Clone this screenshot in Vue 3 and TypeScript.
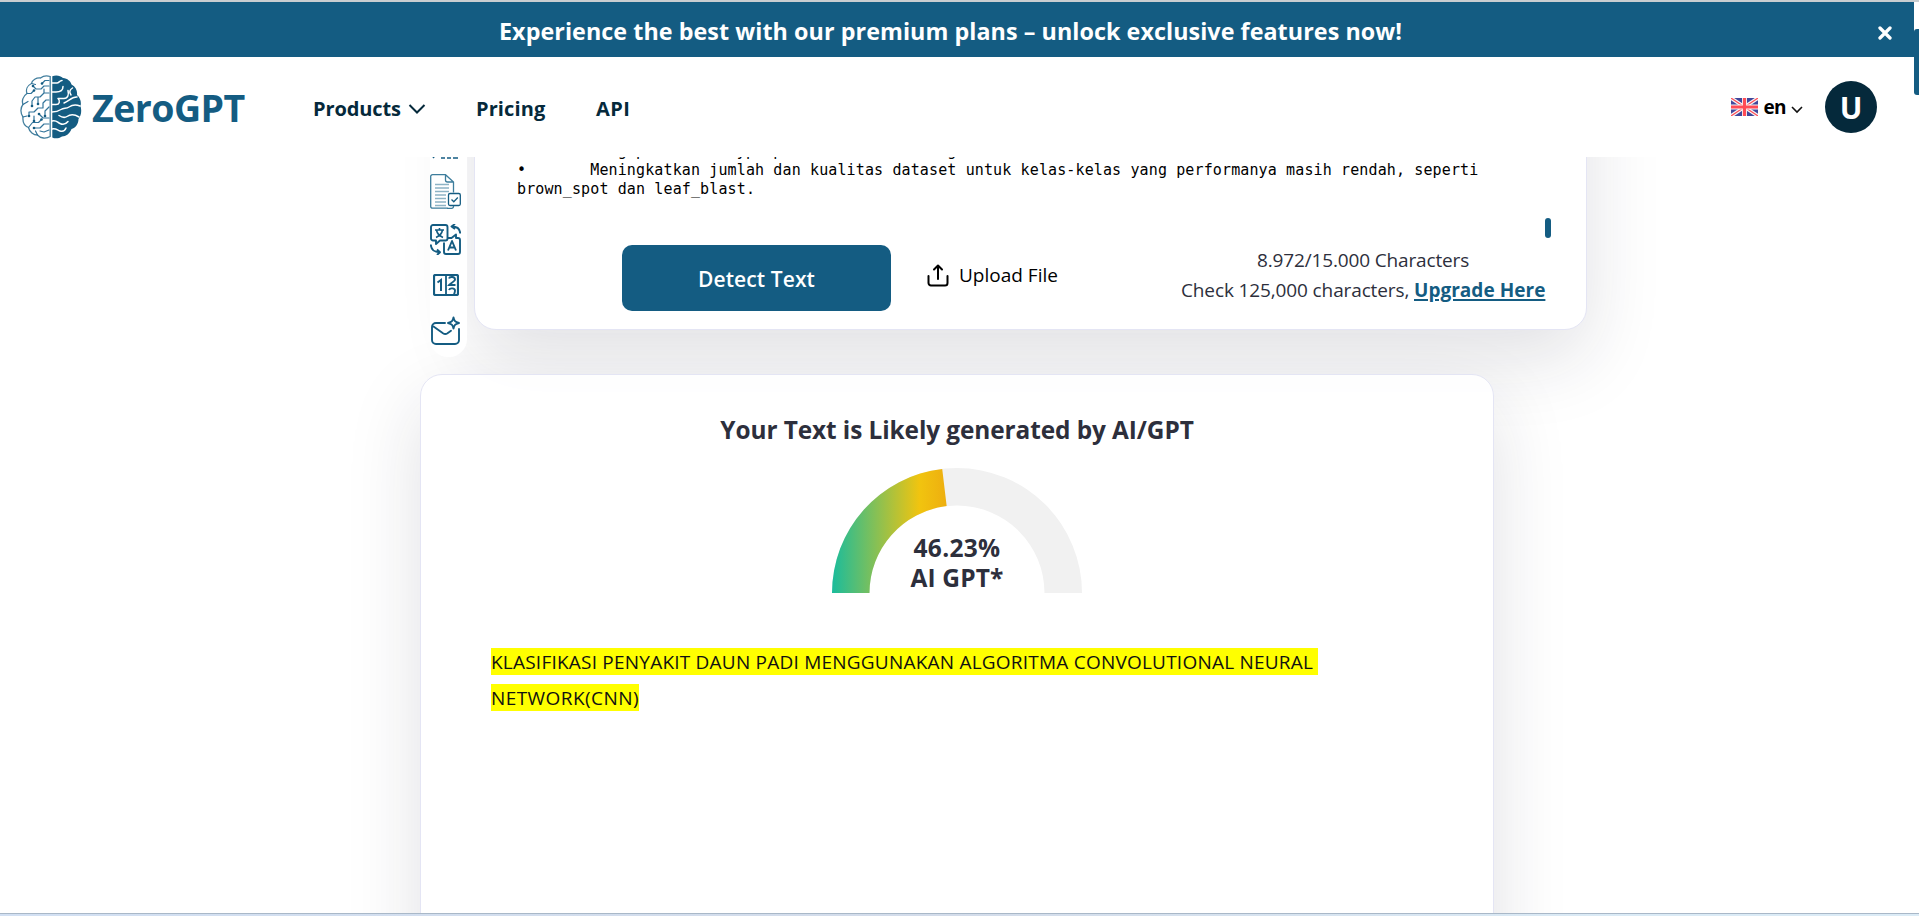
<script setup lang="ts">
import { computed, ref } from 'vue'

const percent = ref(46.23)

const CX = 125
const CY = 125
const R_OUT = 125
const R_IN = 87.5

function ring(from: number, to: number): string {
  const pt = (r: number, f: number) => {
    const a = Math.PI * (1 - f)
    return `${(CX + r * Math.cos(a)).toFixed(2)} ${(CY - r * Math.sin(a)).toFixed(2)}`
  }
  return `M${pt(R_OUT, from)}A${R_OUT} ${R_OUT} 0 0 1 ${pt(R_OUT, to)}L${pt(R_IN, to)}A${R_IN} ${R_IN} 0 0 0 ${pt(R_IN, from)}Z`
}

const track = ring(0, 1)
const fill = computed(() => ring(0, percent.value / 100))

const draft = [
  '•       Mengoptimalkan hyperparameter model dengan',
  '•       Meningkatkan jumlah dan kualitas dataset untuk kelas-kelas yang performanya masih rendah, seperti',
  'brown_spot dan leaf_blast.',
].join('\n')

const highlighted = [
  'KLASIFIKASI PENYAKIT DAUN PADI MENGGUNAKAN ALGORITMA CONVOLUTIONAL NEURAL ',
  'NETWORK(CNN)',
]
</script>

<template>
  <div class="page">
    <div class="promo">
      <p>Experience the best with our premium plans – unlock exclusive features now!</p>
      <button class="close" aria-label="Close">
        <svg width="14" height="14" viewBox="0 0 14 14"><path d="M2 2l10 10M12 2L2 12" stroke="#fff" stroke-width="3.3" stroke-linecap="round" /></svg>
      </button>
    </div>

    <header class="nav">
      <a class="brand">
        <svg class="brain" width="62" height="64" viewBox="0 0 62 64" fill="none">
          <path d="M30.200 1.500C27 .5 23 1 20.500 3C16.500 2.500 12 5 11.500 8.500C7.500 10.500 5.500 14.500 7 18.500C3 21 1.500 26 3 29.500C0 33 .5 38.500 3 42C2.500 47 4.500 51 8.500 52.500C9.500 57 13.500 60 17.500 60C20.500 63.500 26 64 30.200 61.500Z" stroke="#437f9e" stroke-width="1.300" />
          <path d="M29 5.500h-4l-3 3M29 11h-5l-3 3h-5l-3-3M11.500 8.500l4 1M7 18.500h4l3-3M29 18h-5l-4 4h-5l-3 4v5M3 29.500l5-3M29 25h-3l-3 3v5h-5l-4 4H9v4M3 42l4-1M18 22v7M29 32l-4 4v5M29 43h-6l-4-4M8.500 52.500l4-5h6l3-3M29 49h-5l-4 4h-6M29 55l-5 2-4-1M17.500 60l-2-4M14 41v5M24 14v4" stroke="#32749a" stroke-width="1.200" stroke-linecap="round" stroke-linejoin="round" />
          <g fill="#145c82"><circle cx="22" cy="8.500" r="1.300" /><circle cx="13" cy="11" r="1.300" /><circle cx="14" cy="15.500" r="1.300" /><circle cx="18" cy="29" r="1.300" /><circle cx="12" cy="31" r="1.300" /><circle cx="9" cy="41" r="1.300" /><circle cx="25" cy="41" r="1.300" /><circle cx="19" cy="39" r="1.300" /><circle cx="14" cy="46" r="1.300" /><circle cx="21.500" cy="44.500" r="1.300" /><circle cx="14" cy="53" r="1.300" /></g>
          <path d="M32.300 1.200C36-.2 40.500.5 43 3C47.500 3.500 50.500 6 51.500 9.500C56 12 57.500 16 57 20C60.500 23 61.500 27.500 60.500 31C62 36 61 41 58.500 44C58.500 49 55.500 53 51.500 54C50 58.500 46 61.500 42 61.500C39 63.500 35 64 32.300 62.500Z" fill="#145c82" />
          <path d="M32 8h5c2 0 2.500-2.500 5-2.500M32 17h4c5 0 7-2 7-5.500M38 23.500h6c4 0 5-4 4-8M52.500 13c-3 2-3.500 4-1.500 7M57 22c-5-.5-8 4-13 6M32 29.500h4c3.500 0 4.500-3.500 2-6M60 31c-4-1.500-8-1-11 1s-5 .5-8 2.500-5 2.500-9 2.500M59 42c-5-3-9-2.500-12-.5s-5 1-8-1M32 46c4-1.500 5 1 8 2.500s6 .5 8-2M32 54c4-1 5 1 8 2s5-.5 6-3" stroke="#fff" stroke-width="1.500" stroke-linecap="round" />
        </svg>
        <span>ZeroGPT</span>
      </a>
      <nav class="links">
        <a class="products">Products
          <svg width="18" height="10" viewBox="0 0 18 10"><path d="M1.500 1L9 8.500 16.500 1" fill="none" stroke="#05293b" stroke-width="2" /></svg>
        </a>
        <a class="pricing">Pricing</a>
        <a class="api">API</a>
      </nav>
      <div class="account">
        <svg class="flag" width="27" height="18" viewBox="0 0 27 18">
          <rect width="27" height="18" rx="1.500" fill="#41479b" />
          <path d="M0 0L27 18M27 0L0 18" stroke="#f5f5f5" stroke-width="3.600" />
          <path d="M0 0L13.500 9M27 18L13.500 9M27 0L13.500 9M0 18L13.500 9" stroke="#ff4b55" stroke-width="1.200" />
          <path d="M13.500 0V18M0 9H27" stroke="#f5f5f5" stroke-width="5" />
          <path d="M13.500 0V18M0 9H27" stroke="#ff4b55" stroke-width="3.200" />
        </svg>
        <span class="lang">en</span>
        <svg class="lang-caret" width="12" height="8" viewBox="0 0 12 8"><path d="M1 1l5 5 5-5" fill="none" stroke="#111" stroke-width="1.600" /></svg>
        <span class="avatar">U</span>
      </div>
    </header>

    <main class="content">
      <div class="editor-row">
        <aside class="tools">
          <svg width="31" height="12" viewBox="0 0 31 12" fill="none" stroke="#145c82" stroke-width="1.600"><path d="M2 8l2 3M11 11h4M17 11h4M23 11h5" /></svg>
          <svg class="t-doc" width="31" height="35" viewBox="0 0 31 35" fill="none" stroke="#3d7d9c" stroke-width="1.300">
            <path d="M18 34.200H2.500a1.800 1.800 0 0 1-1.800-1.800V2.500A1.800 1.800 0 0 1 2.500.7h13L23.500 8v10.500M15.500.7V6a2 2 0 0 0 2 2h6M23.500 32v.500a1.800 1.800 0 0 1-1.800 1.800H17" />
            <path d="M5 10.500h14M5 14h14M5 17.500h14M5 21h11M5 24.500h11M5 28h11M5 31.500h11" stroke="#8db3c5" />
            <rect x="18.500" y="19.500" width="11.800" height="12" rx="1.500" fill="#fff" stroke="#145c82" />
            <path d="M21.500 25.500l2.300 2.300 4-4.300" stroke="#145c82" />
          </svg>
          <svg class="t-translate" width="31" height="31" viewBox="0 0 31 31" fill="none" stroke="#145c82" stroke-width="1.900" stroke-linejoin="round">
            <path d="M3 1h12.500a2 2 0 0 1 2 2v11.500a2 2 0 0 1-2 2H10L6 20v-3.500H3a2 2 0 0 1-2-2V3a2 2 0 0 1 2-2z" />
            <path d="M5 6h9M9.500 4v2M12.500 6c-.5 3-3 6-6.500 7.500M6.500 6c.5 3 3 6 6.500 7.500" stroke-width="1.600" />
            <path d="M14 18.500V28a2 2 0 0 0 2 2h12a2 2 0 0 0 2-2V16a2 2 0 0 0-2-2h-2v-3.500L21.500 14h-4" />
            <path d="M18 26.500l4-9.500 4 9.500M19.500 23.500h5" />
            <path d="M30.200 9.500C30 5 27 2.500 22 2.500M25 0l-3.500 2.500L25 5M.8 20.500C1 25.500 4 28.200 9.500 28.200M7 25.500l3 2.700L7 31" />
          </svg>
          <svg class="t-count" width="26" height="22" viewBox="0 0 26 22" fill="none" stroke="#145c82">
            <rect x="1" y="1" width="24" height="20" rx="1.500" stroke-width="2.200" />
            <path d="M13 1v20" stroke-width="1.800" />
            <path d="M4.500 8.500L8 6v11" stroke-width="2" />
            <path d="M16 4.500c.5-2 6-2.300 6 1 0 2-4.500 3.500-6 5.500h6.500M16 16c1-2.500 6-2 6 .5 0 1.500-.5 2.500-1 4" stroke-width="1.900" />
          </svg>
          <svg class="t-mail" width="31" height="30" viewBox="0 0 31 30" fill="none" stroke="#145c82" stroke-width="1.900" stroke-linecap="round">
            <path d="M15 7H6a4 4 0 0 0-4 4v13a4 4 0 0 0 4 4h19a4 4 0 0 0 4-4V13" />
            <path d="M3.500 10.500L13 17.300a4 4 0 0 0 4.500 0l3.500-2.500" />
            <path d="M23.500 1.500c.7 3.500 1.500 4.500 5.500 5.500-4 1-4.800 2-5.500 5.500C22.800 9 22 8 18 7c4-1 4.800-2 5.500-5.500z" stroke-linejoin="round" />
          </svg>
        </aside>

        <section class="card editor">
          <pre class="draft">{{ draft }}</pre>
          <span class="thumb" />
          <div class="controls">
            <button class="detect">Detect Text</button>
            <button class="upload">
              <svg width="22" height="23" viewBox="0 0 22 23" fill="none" stroke="#000" stroke-width="2" stroke-linecap="round" stroke-linejoin="round"><path d="M1.500 12v7a2.500 2.500 0 0 0 2.500 2.500h14a2.500 2.500 0 0 0 2.500-2.500v-7M11 15V2M7 5.500L11 1.500l4 4" /></svg>
              <span>Upload File</span>
            </button>
            <div class="quota">
              <p class="used">8.972/15.000 Characters</p>
              <p class="more">Check 125,000 characters, <a>Upgrade Here</a></p>
            </div>
          </div>
        </section>
      </div>

      <section class="card result">
        <h2>Your Text is Likely generated by AI/GPT</h2>
        <div class="gauge">
          <svg width="250" height="125" viewBox="0 0 250 125">
            <defs>
              <linearGradient id="score" gradientUnits="userSpaceOnUse" x1="0" y1="0" x2="250" y2="0">
                <stop offset="0" stop-color="#1abc9c" />
                <stop offset=".35" stop-color="#f1c40f" />
                <stop offset=".7" stop-color="#e67e12" />
              </linearGradient>
            </defs>
            <path :d="track" fill="#f1f1f1" />
            <path :d="fill" fill="url(#score)" />
          </svg>
          <div class="score"><span class="num">{{ percent }}%</span><span class="unit">AI GPT*</span></div>
        </div>
        <div class="passage">
          <div v-for="(line, i) in highlighted" :key="i"><mark :class="i ? 'tail' : 'lead'">{{ line }}</mark></div>
        </div>
      </section>
    </main>

    <div class="page-thumb" />
    <div class="desk" />
  </div>
</template>

<style>
html,
body {
  overflow: hidden;
}
</style>

<style scoped>
.page {
  position: relative;
  display: flex;
  flex-direction: column;
  box-sizing: border-box;
  height: 916px;
  border-top: 2px solid #c9cdd0;
  background: #fff;
  overflow: hidden;
  font-family: "Open Sans", "Noto Sans", sans-serif;
  color: #05293b;
}
p,
h2,
pre {
  margin: 0;
}
button {
  border: 0;
  padding: 0;
  background: none;
  font-family: inherit;
}
.promo {
  flex: none;
  display: flex;
  align-items: center;
  box-sizing: border-box;
  width: 1914px;
  height: 55px;
  padding-left: 499px;
  background: #145c82;
  color: #fff;
}
.promo p {
  width: 1379px;
  padding-top: 3px;
  font-size: 23.3px;
  font-weight: 700;
  letter-spacing: 0.06px;
  line-height: 30px;
}
.close {
  height: 14px;
  margin-top: 7px;
  line-height: 0;
}
.nav {
  flex: none;
  display: flex;
  align-items: center;
  height: 100px;
  background: #fff;
}
.brand {
  display: flex;
  align-items: center;
  gap: 10px;
  width: 293px;
  padding-left: 20px;
  color: #145c82;
  font-size: 37.5px;
  font-weight: 700;
  letter-spacing: -0.55px;
}
.links {
  display: flex;
  align-items: center;
  padding-top: 3px;
  font-size: 20px;
  font-weight: 700;
  line-height: 28px;
}
.products {
  display: flex;
  align-items: center;
  justify-content: space-between;
  width: 113px;
  margin-right: 50px;
  letter-spacing: -0.1px;
}
.pricing {
  width: 120px;
  letter-spacing: 0.1px;
}
.api {
  letter-spacing: 0.5px;
}
.account {
  display: flex;
  align-items: center;
  margin-left: auto;
  margin-right: 42px;
}
.lang {
  margin: 0 5px 0 5px;
  color: #000;
  font-size: 19px;
  font-weight: 700;
  letter-spacing: -0.6px;
}
.lang-caret {
  margin-top: 6px;
}
.avatar {
  display: flex;
  align-items: center;
  justify-content: center;
  width: 52px;
  height: 52px;
  margin-left: 22px;
  border-radius: 50%;
  background: #05293b;
  color: #fff;
  font-size: 30px;
  font-weight: 700;
}
.content {
  flex: 1;
  min-height: 0;
  width: 1914px;
  overflow: hidden;
}
.editor-row {
  display: flex;
  align-items: flex-end;
  gap: 7px;
  height: 373px;
  margin-top: -200px;
  padding-left: 430px;
}
.tools {
  position: relative;
  z-index: 2;
  display: flex;
  flex-direction: column;
  justify-content: flex-end;
  flex: none;
  box-sizing: border-box;
  width: 37px;
  height: 400px;
  margin-bottom: -27px;
  padding-bottom: 11px;
  border-radius: 0 0 18px 18px;
  background: #fff;
}
.t-doc {
  margin-top: 15px;
}
.t-translate {
  margin-top: 15px;
}
.t-count {
  margin: 19px 0 0 3px;
}
.t-mail {
  margin-top: 20px;
}
.card {
  box-sizing: border-box;
  border: 1px solid #e4e5f4;
  border-radius: 22px;
  box-shadow: 0 28px 76px rgba(30, 32, 50, 0.135);
}
.editor {
  display: flex;
  flex-direction: column;
  justify-content: flex-end;
  width: 1113px;
  height: 373px;
  padding: 0 34px 18px 42px;
  background: #fff;
}
.draft {
  color: #000;
  font: 15px/19px "DejaVu Sans Mono", monospace;
  letter-spacing: 0.125px;
}
.thumb {
  align-self: flex-end;
  width: 6px;
  height: 20px;
  margin: 19px 1px 0 0;
  border-radius: 3px;
  background: #145c82;
}
.controls {
  display: flex;
  align-items: flex-start;
  height: 66px;
  margin-top: 7px;
  padding-left: 105px;
}
.detect {
  width: 269px;
  height: 66px;
  padding-top: 2px;
  border-radius: 10px;
  background: #145c82;
  color: #fff;
  font-size: 21px;
  font-weight: 600;
  letter-spacing: 0.1px;
}
.upload {
  display: flex;
  align-items: center;
  gap: 10px;
  width: 254px;
  margin: 17px 0 0 36px;
  color: #000;
  font-size: 19px;
  letter-spacing: 0;
  line-height: 26px;
}
.quota {
  color: #2d2f3c;
  font-size: 19px;
  line-height: 30px;
  white-space: nowrap;
}
.used {
  padding-left: 76px;
  letter-spacing: -0.15px;
}
.more {
  letter-spacing: -0.123px;
}
.quota a {
  color: #145c82;
  font-weight: 700;
  letter-spacing: 0.03px;
  text-decoration: underline 2px;
  text-underline-offset: 2px;
}
.result {
  position: relative;
  display: flex;
  flex-direction: column;
  align-items: center;
  width: 1074px;
  height: 800px;
  margin: 44px 0 0 420px;
  padding-top: 38px;
  background: rgba(255, 255, 255, 0.86);
}
.result h2 {
  color: #2d2f3c;
  font-size: 24.4px;
  font-weight: 700;
  letter-spacing: -0.08px;
  line-height: 34px;
}
.gauge {
  position: relative;
  height: 125px;
  margin-top: 21px;
  line-height: 0;
}
.score {
  position: absolute;
  inset: 65px 0 0;
  display: flex;
  flex-direction: column;
  align-items: center;
  color: #2d2f3c;
  font-size: 24.5px;
  font-weight: 700;
  line-height: 30px;
}
.num {
  letter-spacing: 0.3px;
}
.unit {
  letter-spacing: 0.15px;
}
.passage {
  align-self: stretch;
  margin-top: 49px;
  padding-left: 70px;
  color: #000;
  font-size: 19px;
  line-height: 36px;
  white-space: pre;
}
.passage mark {
  display: inline-block;
  height: 27px;
  background: #ff0;
  color: #111;
  line-height: 28px;
  vertical-align: middle;
}
.passage div {
  height: 36px;
}
.lead {
  letter-spacing: 0.22px;
}
.tail {
  letter-spacing: 0.43px;
}
.page-thumb {
  position: absolute;
  top: 27px;
  right: 0;
  width: 5px;
  height: 66px;
  border-radius: 3px 0 0 3px;
  background: #145c82;
}
.desk {
  flex: none;
  height: 2px;
  border-top: 1px solid #a9b8c8;
  background: linear-gradient(90deg, #d2e0f3, #d3dcea 50%, #dbebf6 85%);
}
</style>
